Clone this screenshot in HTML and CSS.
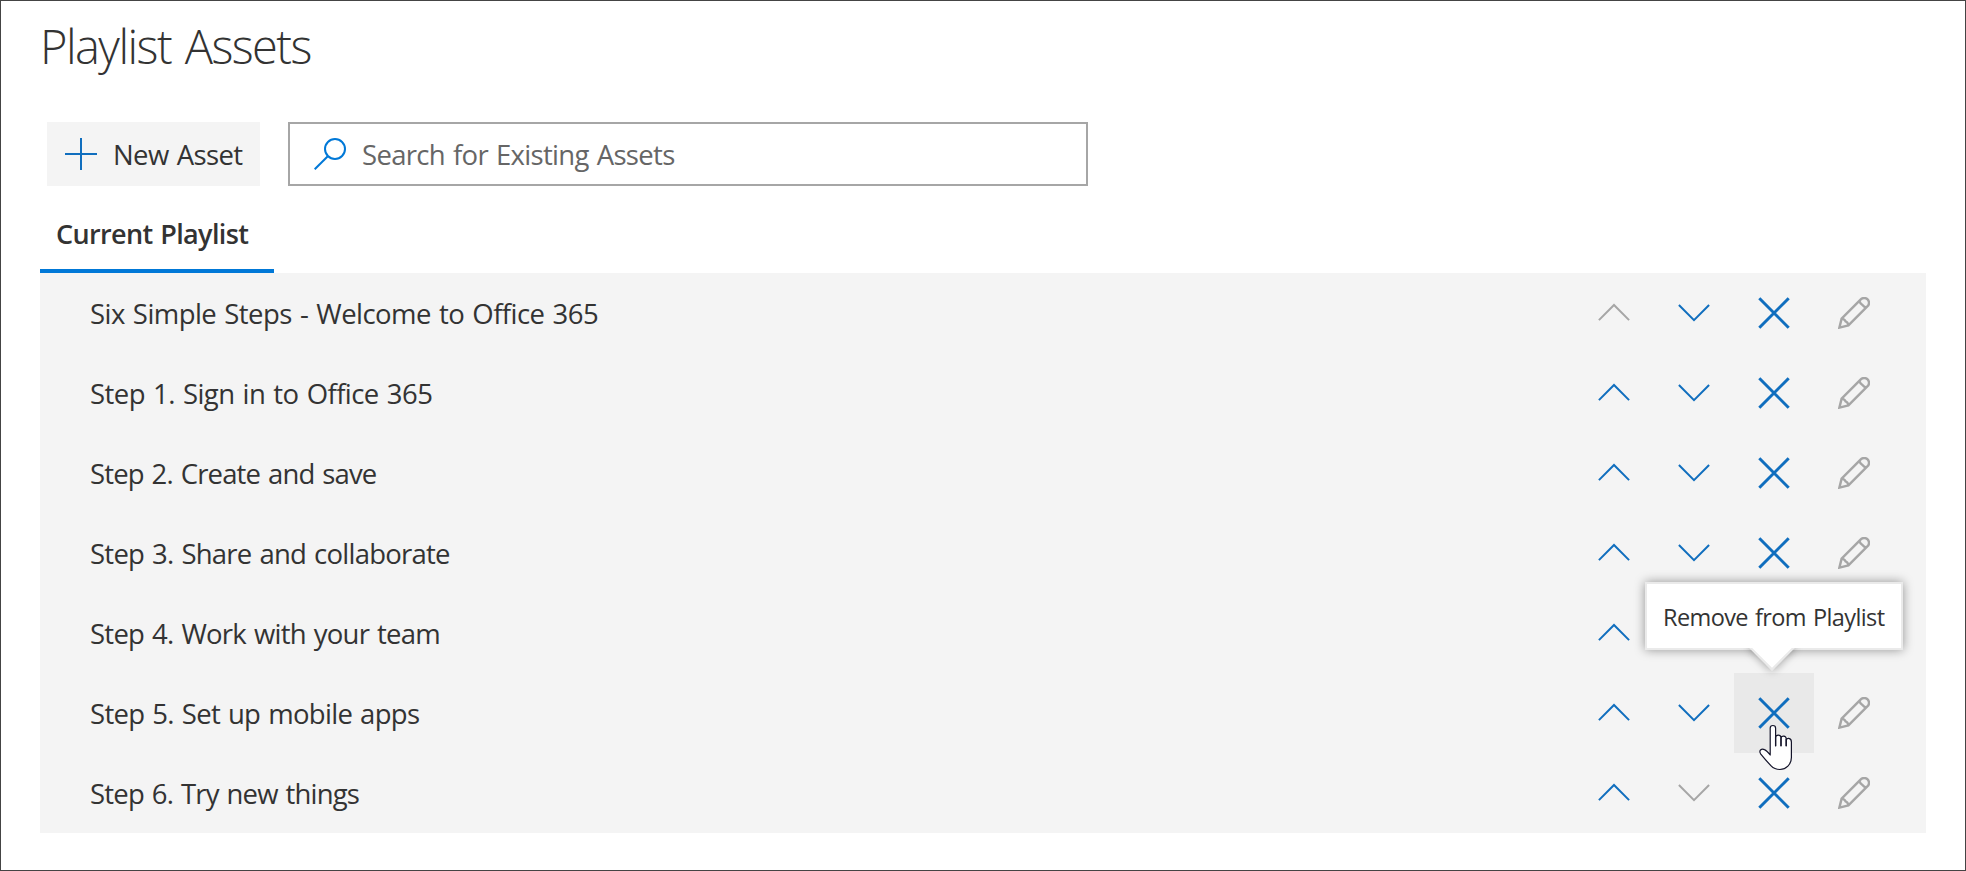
FILE: index.html
```html
<!DOCTYPE html>
<html lang="en">
<head>
<meta charset="utf-8">
<title>Playlist Assets</title>
<link rel="stylesheet" href="styles.css">
</head>
<body>
<svg class="sprite" aria-hidden="true">
  <symbol id="up" viewBox="0 0 32 32"><path d="M.9 23.1 16 8 31.1 23.1" fill="none" stroke="currentColor" stroke-width="2"/></symbol>
  <symbol id="down" viewBox="0 0 32 32"><path d="M.9 8 16 23.1 31.1 8" fill="none" stroke="currentColor" stroke-width="2"/></symbol>
  <symbol id="remove" viewBox="0 0 32 32"><path d="M1.3 1.3 30.7 30.7M30.7 1.3 1.3 30.7" fill="none" stroke="currentColor" stroke-width="3"/></symbol>
  <symbol id="edit" viewBox="0 0 32 32"><path d="M1.4 30.6 3.6 21.6 22.8 2.4a4.800 4.800 0 0 1 6.800 6.800L10.400 28.400ZM3.600 21.600q3.200.5 4 2.800 2.300.8 2.800 4M21.400 3.800q.8 2.800 2.800 4 1.600 2 4 2.800" fill="none" stroke="currentColor" stroke-width="2.4"/></symbol>
</svg>
<main class="page">
  <h1 class="title">Playlist Assets</h1>
  <div class="toolbar">
    <button class="new-asset" type="button">
      <svg class="icon" viewBox="0 0 32 32"><path d="M16 0V32M0 16H32" fill="none" stroke="currentColor" stroke-width="2"/></svg>
      <span class="new-label">New Asset</span>
    </button>
    <div class="search">
      <svg class="icon" viewBox="0 0 32 32"><circle cx="21" cy="11" r="10" fill="none" stroke="currentColor" stroke-width="2"/><path d="M13.800 18.200.7 31.300" fill="none" stroke="currentColor" stroke-width="2"/></svg>
      <span class="placeholder">Search for Existing Assets</span>
    </div>
  </div>
  <div class="tabs"><div class="tab">Current Playlist</div></div>
  <ul class="list">
    <li class="row"><span class="name welcome">Six Simple Steps - Welcome to Office 365</span>
      <span class="cell disabled"><svg class="icon"><use href="#up"/></svg></span><span class="cell"><svg class="icon"><use href="#down"/></svg></span><span class="cell"><svg class="icon"><use href="#remove"/></svg></span><span class="cell disabled"><svg class="icon"><use href="#edit"/></svg></span></li>
    <li class="row"><span class="name signin">Step 1. Sign in to Office 365</span>
      <span class="cell"><svg class="icon"><use href="#up"/></svg></span><span class="cell"><svg class="icon"><use href="#down"/></svg></span><span class="cell"><svg class="icon"><use href="#remove"/></svg></span><span class="cell disabled"><svg class="icon"><use href="#edit"/></svg></span></li>
    <li class="row"><span class="name create">Step 2. Create and save</span>
      <span class="cell"><svg class="icon"><use href="#up"/></svg></span><span class="cell"><svg class="icon"><use href="#down"/></svg></span><span class="cell"><svg class="icon"><use href="#remove"/></svg></span><span class="cell disabled"><svg class="icon"><use href="#edit"/></svg></span></li>
    <li class="row"><span class="name">Step 3. Share and collaborate</span>
      <span class="cell"><svg class="icon"><use href="#up"/></svg></span><span class="cell"><svg class="icon"><use href="#down"/></svg></span><span class="cell"><svg class="icon"><use href="#remove"/></svg></span><span class="cell disabled"><svg class="icon"><use href="#edit"/></svg></span></li>
    <li class="row"><span class="name">Step 4. Work with your team</span>
      <span class="cell"><svg class="icon"><use href="#up"/></svg></span><span class="cell"></span><span class="cell"></span><span class="cell"></span></li>
    <li class="row"><span class="name mobile">Step 5. Set up mobile apps</span>
      <span class="cell"><svg class="icon"><use href="#up"/></svg></span><span class="cell"><svg class="icon"><use href="#down"/></svg></span><span class="cell hovered"><svg class="icon"><use href="#remove"/></svg>
        <span class="tooltip"><span class="beak"></span><span class="tip-text">Remove from Playlist</span></span>
        <svg class="cursor" viewBox="0 0 36 48"><path d="M11.200 31V4.200a2.700 2.700 0 0 1 5.400 0V22 13.400q.3-2.300 2.600-2.300 2.600 0 2.800 2.600V22 14q.6-2 2.800-1.800 2.200.2 2.400 2.600V22 16q.6-1.900 2.600-1.700 2.600.4 2.600 3.600V33.500q0 5-3.500 8.600-3.300 3.300-8 3.400-5.400 0-8.800-3.600Q7.500 37 1.600 29.800.2 27.500 1.500 26q1.700-1.500 4-.4 2.300 1 5.700 5.400Z" fill="#fff" stroke="#14142a" stroke-width="1.200" stroke-linejoin="round"/><path d="M16.600 13V22M22 13.500V22M27.200 15V22" fill="none" stroke="#14142a" stroke-width="1.300"/></svg>
      </span><span class="cell disabled"><svg class="icon"><use href="#edit"/></svg></span></li>
    <li class="row"><span class="name things">Step 6. Try new things</span>
      <span class="cell"><svg class="icon"><use href="#up"/></svg></span><span class="cell disabled"><svg class="icon"><use href="#down"/></svg></span><span class="cell"><svg class="icon"><use href="#remove"/></svg></span><span class="cell disabled"><svg class="icon"><use href="#edit"/></svg></span></li>
  </ul>
</main>
</body>
</html>
```
FILE: styles.css
```css
* { box-sizing: border-box; }
body {
  margin: 0;
  background: #fff;
  color: #333;
  font: 400 27.5px/36px "Open Sans", "Noto Sans", sans-serif;
  white-space: nowrap;
}
.sprite { display: none; }
.icon { display: block; width: 32px; height: 32px; flex: none; }
.page {
  height: 871px;
  padding: 15px 39px 0;
  border: 1px solid #444;
}
.title {
  margin: 0;
  font-size: 47px;
  font-weight: 300;
  line-height: 60px;
  letter-spacing: -1.55px;
  word-spacing: 3px;
}
.toolbar {
  display: flex;
  gap: 28px;
  margin: 46px 0 0 7px;
}
.new-asset {
  display: flex;
  align-items: center;
  gap: 16px;
  width: 213px;
  height: 64px;
  padding: 0 0 0 18px;
  border: 0;
  background: #f4f4f4;
  color: #106ebe;
  font: inherit;
}
.new-label { padding-top: 2px; color: #333; letter-spacing: -.6px; word-spacing: 1.5px; }
.search {
  display: flex;
  align-items: center;
  gap: 16px;
  width: 800px;
  height: 64px;
  padding-left: 24px;
  border: 2px solid #a6a6a6;
  color: #0078d7;
}
.placeholder { padding-top: 2px; color: #666; letter-spacing: -.68px; word-spacing: 1.5px; }
.tabs { display: flex; padding-top: 29px; }
.tab {
  width: 234px;
  height: 58px;
  padding: 1px 0 0 16px;
  border-bottom: 4px solid #0078d7;
  font-size: 27px;
  font-weight: 600;
  letter-spacing: -.65px;
  word-spacing: 1.5px;
}
.list {
  margin: 0;
  padding: 0;
  list-style: none;
  background: #f4f4f4;
}
.row {
  display: flex;
  align-items: center;
  height: 80px;
  padding: 0 32px 0 50px;
}
.name { flex: 1; padding-top: 2px; letter-spacing: -.75px; word-spacing: 1.5px; }
.welcome { letter-spacing: -.55px; }
.signin { letter-spacing: -.56px; }
.create { letter-spacing: -.84px; }
.mobile { letter-spacing: -.7px; }
.things { letter-spacing: -.81px; }
.cell {
  display: flex;
  align-items: center;
  justify-content: center;
  width: 80px;
  height: 80px;
  color: #106ebe;
}
.disabled { color: #a6a6a6; }
.hovered { position: relative; background: #e9e9e9; }
.tooltip {
  position: absolute;
  z-index: 1;
  left: -89px;
  bottom: 103px;
  width: 258px;
  height: 68px;
  border: 2px solid #eaeaea;
  background: #fff;
  box-shadow: 0 0 10px rgba(0, 0, 0, .4);
  color: #333;
}
.beak {
  position: absolute;
  left: 109px;
  top: 48px;
  width: 32px;
  height: 32px;
  border: 2px solid #eaeaea;
  background: #fff;
  box-shadow: 0 0 10px rgba(0, 0, 0, .4);
  transform: rotate(45deg);
}
.tip-text {
  position: absolute;
  inset: 0;
  padding-left: 16px;
  background: #fff;
  font-size: 23.5px;
  line-height: 67px;
  letter-spacing: -.6px;
  word-spacing: 1.5px;
}
.cursor {
  position: absolute;
  z-index: 2;
  left: 25px;
  top: 51px;
  width: 36px;
  height: 48px;
}
```
